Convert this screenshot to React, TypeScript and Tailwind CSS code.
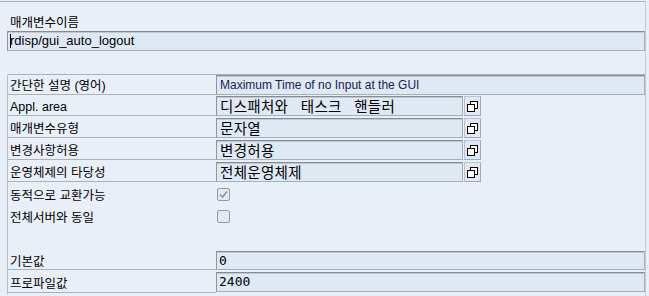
import React from 'react';

const kr = "font-['Noto_Sans_CJK_KR',sans-serif]";

const CopyButton: React.FC = () => (
  <div className="ml-px w-[17px] h-[20px] bg-[#e2e8ef] border border-[#b9c3ce] border-r-[#99abc2] border-b-[#99abc2] flex items-center justify-center">
    <svg width="11" height="11" viewBox="0 0 11 11">
      <rect x="3.5" y="0.5" width="7" height="7" fill="#fff" stroke="#000" />
      <rect x="0.5" y="3.5" width="7" height="7" fill="#fff" stroke="#000" />
      <line x1="1" y1="10.5" x2="8" y2="10.5" stroke="#000" />
    </svg>
  </div>
);

const fieldBase =
  'h-[20px] bg-[#dfe9f4] border border-[#a6aeb6] border-t-[#868c93] border-l-[#8f959c] shadow-[inset_0_1px_0_#c2c8ce] flex items-center';

const Label: React.FC<{ text: string; lined?: boolean; h?: string }> = ({ text, lined = true, h = 'h-[20px]' }) => (
  <div
    className={`w-[208px] ${h} shrink-0 flex items-center pl-[2px] pt-[4px] leading-none whitespace-nowrap ${
      lined ? 'border-b border-[#a9b1b9]' : ''
    }`}
  >
    {text}
  </div>
);

const HelpRow: React.FC<{ label: string; value: string }> = ({ label, value }) => (
  <div className="flex h-[22px]">
    <Label text={label} />
    <div className={`${fieldBase} w-[247px] pl-[3px] pt-px ${kr} text-[14.5px] leading-none tracking-[0.3px] [word-spacing:9px] text-black`}>
      {value}
    </div>
    <CopyButton />
  </div>
);

const CheckRow: React.FC<{ label: string; checked?: boolean }> = ({ label, checked }) => (
  <div className="flex h-[22px]">
    <Label text={label} lined={false} h="h-[20px]" />
    <div className="ml-px mt-[4px] w-[13px] h-[13px] rounded-[2px] border border-[#959ca4] bg-[#e1e9f2] flex items-center justify-center">
      {checked && (
        <svg width="9" height="9" viewBox="0 0 9 9">
          <path d="M1 4.5 L3.5 7 L8 1.5" fill="none" stroke="#8b9097" strokeWidth="1.6" />
        </svg>
      )}
    </div>
  </div>
);

export default function App() {
  return (
    <div className="w-[649px] h-[296px] bg-[#e9eff7] overflow-hidden text-[12.5px] text-black font-['Liberation_Sans','Noto_Sans_CJK_KR',sans-serif]">
      <div className="mt-px h-[295px] mr-[3px] border-t border-r border-[#a9b0b8] border-r-[#c3cad2] flex flex-col">
        <div className="pl-[10px] pt-[15px] h-[26px] leading-none">매개변수이름</div>
        <div className="mt-[3px] ml-[7px] h-[20px] bg-[#dfe9f4] border border-[#a6aeb6] border-t-[#868c93] border-l-[#8f959c] shadow-[inset_0_1px_0_#c2c8ce] flex items-center pl-[2px] text-[13px]">
          <span className="w-px h-[14px] bg-black -mr-px" />
          <span>rdisp/gui_auto_logout</span>
        </div>

        <div className="mt-[24px] ml-[7px] border-l border-[#b5bcc4]">
          <div className="flex h-[22px] border-t border-[#a9b1b9] -mt-px">
            <Label text="간단한 설명 (영어)" />
            <div className={`${fieldBase} flex-1 pl-[3px] text-[12px] text-[#1a1a55]`}>Maximum Time of no Input at the GUI</div>
          </div>
          <HelpRow label="Appl. area" value="디스패처와 태스크 핸들러" />
          <HelpRow label="매개변수유형" value="문자열" />
          <HelpRow label="변경사항허용" value="변경허용" />
          <HelpRow label="운영체제의 타당성" value="전체운영체제" />
          <CheckRow label="동적으로 교환가능" checked />
          <CheckRow label="전체서버와 동일" />
          <div className="h-[23px]" />
          <div className="flex h-[21px]">
            <Label text="기본값" h="h-[19px]" />
            <div className={`${fieldBase} !h-[19px] flex-1 pl-[2px] font-['DejaVu_Sans_Mono',monospace] text-[13px]`}>0</div>
          </div>
          <div className="flex h-[22px]">
            <Label text="프로파일값" h="h-[21px]" />
            <div className={`${fieldBase} flex-1 pl-[2px] font-['DejaVu_Sans_Mono',monospace] text-[13px]`}>2400</div>
          </div>
        </div>
      </div>
    </div>
  );
}
